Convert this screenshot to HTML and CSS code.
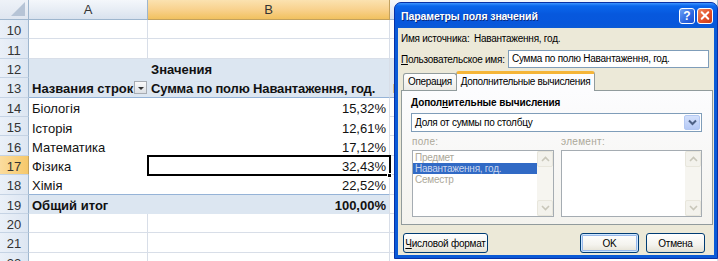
FILE: index.html
```html
<!DOCTYPE html>
<html lang="ru">
<head>
<meta charset="utf-8">
<link rel="stylesheet" href="styles.css">
</head>
<body>
<div class="screen">
  <div class="sheet">
    <div class="corner"></div><div class="ch">A</div><div class="ch sel">B</div><div class="ch">C</div>

    <div class="rh">10</div><div class="c"></div><div class="c"></div><div class="c"></div>
    <div class="rh">11</div><div class="c"></div><div class="c"></div><div class="c"></div>
    <div class="rh">12</div><div class="c pv pa"></div><div class="c pv b">Значения</div><div class="c pv"></div>
    <div class="rh">13</div><div class="c pv pa hd b lbl"><span>Названия строк</span><span class="dd"></span></div><div class="c pv hd b">Сумма по полю Навантаження, год.</div><div class="c pv hd b">Н</div>
    <div class="rh">14</div><div class="c pa pb">Біологія</div><div class="c pb num">15,32%</div><div class="c"></div>
    <div class="rh">15</div><div class="c pa pb">Історія</div><div class="c pb num">12,61%</div><div class="c"></div>
    <div class="rh">16</div><div class="c pa pb">Математика</div><div class="c pb num">17,12%</div><div class="c"></div>
    <div class="rh sel">17</div><div class="c pa pb">Фізика</div><div class="c pb num active">32,43%</div><div class="c"></div>
    <div class="rh">18</div><div class="c pa pb ln">Хімія</div><div class="c pb num ln">22,52%</div><div class="c"></div>
    <div class="rh">19</div><div class="c pv pa b">Общий итог</div><div class="c pv b num">100,00%</div><div class="c"></div>
    <div class="rh">20</div><div class="c"></div><div class="c"></div><div class="c"></div>
    <div class="rh">21</div><div class="c"></div><div class="c"></div><div class="c"></div>
    <div class="rh">22</div><div class="c"></div><div class="c"></div><div class="c"></div>
  </div>

  <div class="dialog">
    <div class="titlebar">
      <span class="title">Параметры поля значений</span>
      <span class="tbtn help">?</span>
      <span class="tbtn close"><svg width="15" height="15" viewBox="0 0 15 15"><path d="M4 4 L11 11 M11 4 L4 11" stroke="#fff" stroke-width="2.2" stroke-linecap="round"/></svg></span>
    </div>
    <div class="body">
      <div class="src"><span class="srclbl">Имя источника:</span><span>Навантаження, год.</span></div>
      <div class="custom"><span class="cuslbl"><u>П</u>ользовательское имя:</span><div class="textbox">Сумма по полю Навантаження, год.</div></div>
      <div class="tabs">
        <div class="tab">Операция</div>
        <div class="tab on">Дополнительные вычисления</div>
      </div>
      <div class="panel">
        <div class="ptitle">Допол<u>н</u>ительные вычисления</div>
        <div class="combo"><span class="ctext">Доля от суммы по столбцу</span><span class="carrow"><svg width="9" height="7" viewBox="0 0 9 7"><path d="M1 1.5 L4.5 5 L8 1.5" fill="none" stroke="#4d6185" stroke-width="2"/></svg></span></div>
        <div class="lists">
          <div class="lcol">
            <div class="llbl">поле:</div>
            <div class="listbox">
              <div class="items">
                <div class="item">Предмет</div>
                <div class="item selitem">Навантаження, год.</div>
                <div class="item">Семестр</div>
              </div>
              <div class="sbar"><span class="sb up"><svg width="9" height="6" viewBox="0 0 9 6"><path d="M1 5 L4.5 1.5 L8 5" fill="none" stroke="#c9c7ba" stroke-width="1.6"/></svg></span><span class="sb dn"><svg width="9" height="6" viewBox="0 0 9 6"><path d="M1 1 L4.5 4.5 L8 1" fill="none" stroke="#c9c7ba" stroke-width="1.6"/></svg></span></div>
            </div>
          </div>
          <div class="lcol">
            <div class="llbl">элемент:</div>
            <div class="listbox">
              <div class="items"></div>
              <div class="sbar"><span class="sb up"><svg width="9" height="6" viewBox="0 0 9 6"><path d="M1 5 L4.5 1.5 L8 5" fill="none" stroke="#c9c7ba" stroke-width="1.6"/></svg></span><span class="sb dn"><svg width="9" height="6" viewBox="0 0 9 6"><path d="M1 1 L4.5 4.5 L8 1" fill="none" stroke="#c9c7ba" stroke-width="1.6"/></svg></span></div>
            </div>
          </div>
        </div>
      </div>
      <div class="btnrow">
        <div class="btn fmt"><u>Ч</u>исловой формат</div>
        <div class="spacer"></div>
        <div class="btn ok">OK</div>
        <div class="btn cancel">Отмена</div>
      </div>
    </div>
  </div>
</div>
</body>
</html>
```

FILE: styles.css
```css
html, body { margin: 0; padding: 0; background: #fff; }
.screen {
  position: relative;
  width: 718px;
  height: 261px;
  overflow: hidden;
  font-family: "Liberation Sans", Arial, sans-serif;
}

/* ---------- spreadsheet ---------- */
.sheet {
  display: grid;
  grid-template-columns: 29px 119px 242px 1fr;
  grid-template-rows: 20px repeat(13, 19.4px);
  font-size: 13px;
  color: #111;
}
.corner {
  background: linear-gradient(#eef2f8, #dfe6f0);
  border-right: 1px solid #9eb6ce;
  border-bottom: 1px solid #9eb6ce;
  box-sizing: border-box;
  position: relative;
}
.corner::after {
  content: "";
  position: absolute;
  right: 3px;
  bottom: 3px;
  border-left: 14px solid transparent;
  border-bottom: 14px solid #b6c4d6;
}
.ch {
  background: linear-gradient(#f4f7fb, #e6ecf4 55%, #d9e2ee);
  border-right: 1px solid #9eb6ce;
  border-bottom: 1px solid #9eb6ce;
  box-sizing: border-box;
  display: flex;
  align-items: center;
  justify-content: center;
  font-size: 13px;
  color: #333;
}
.ch.sel {
  background: linear-gradient(#fbe2b0, #f8d08a 55%, #f1c15f);
  border-right-color: #c2a15e;
  border-bottom-color: #c2a15e;
}
.rh {
  background: linear-gradient(90deg, #eaf0f8, #dde6f2);
  border-right: 1px solid #9eb6ce;
  border-bottom: 1px solid #c5d3e4;
  box-sizing: border-box;
  display: flex;
  align-items: center;
  justify-content: center;
  padding-top: 3px;
  font-size: 13px;
  color: #333;
}
.rh.sel {
  background: linear-gradient(90deg, #fbdc9e, #f6c869);
  border-right-color: #c2a15e;
}
.c {
  border-right: 1px solid #d8dee8;
  border-bottom: 1px solid #d8dee8;
  box-sizing: border-box;
  display: flex;
  align-items: center;
  padding: 3px 3px 0 3px;
  white-space: nowrap;
  overflow: hidden;
}
.pv { background: #dce6f1; }
.pa { border-right: none; }
.pv { border-bottom: none; }
.pb { border-bottom: none; }
.hd { border-bottom: 1px solid #95b3d7; letter-spacing: -0.15px; }
.ln { border-bottom: 1px solid #95b3d7; }
.b { font-weight: bold; }
.num { justify-content: flex-end; }
.lbl { justify-content: space-between; padding-right: 1px; letter-spacing: 0; }
.dd {
  width: 13px;
  height: 13px;
  box-sizing: border-box;
  border: 1px solid #a7acb3;
  background: linear-gradient(#fafafa, #dcdfe4);
  position: relative;
  margin-top: -2px;
}
.dd::after {
  content: "";
  position: absolute;
  left: 3px;
  top: 5px;
  border-left: 3px solid transparent;
  border-right: 3px solid transparent;
  border-top: 3px solid #333;
}
.active {
  position: relative;
  outline: 2px solid #000;
  outline-offset: -1px;
  z-index: 1;
  overflow: visible;
}
.active::after {
  content: "";
  position: absolute;
  right: -3px;
  bottom: -3px;
  width: 5px;
  height: 5px;
  background: #000;
  border: 1px solid #fff;
  box-sizing: border-box;
}

/* ---------- dialog ---------- */
.dialog {
  position: absolute;
  left: 394px;
  top: 2px;
  width: 324px;
  height: 257px;
  box-sizing: border-box;
  background: #0a5ad6;
  border: 1px solid #0831a6;
  border-radius: 7px 7px 0 0;
  padding: 0 3px 3px 3px;
  display: flex;
  flex-direction: column;
  font-size: 10px;
  letter-spacing: -0.25px;
  white-space: nowrap;
  color: #000;
  z-index: 5;
}
.titlebar {
  height: 25px;
  flex: none;
  display: flex;
  align-items: center;
  margin: 0 -3px;
  padding-left: 6px;
  padding-right: 4px;
  border-radius: 6px 6px 0 0;
  background: linear-gradient(#3d95ff 0%, #0a66ec 12%, #0758dd 45%, #0757dc 80%, #0a5ad6 100%);
}
.title {
  flex: 1;
  color: #fff;
  font-weight: bold;
  font-size: 10.5px;
  letter-spacing: -0.1px;
  text-shadow: 1px 1px 0 #0a2a80;
}
.tbtn {
  width: 16px;
  height: 16px;
  box-sizing: border-box;
  border: 1px solid #fff;
  border-radius: 3px;
  display: flex;
  align-items: center;
  justify-content: center;
  color: #fff;
  font-weight: bold;
  font-size: 12px;
  letter-spacing: 0;
  margin-left: 2px;
}
.help { background: linear-gradient(135deg, #6fa2f5, #2c66e0 60%, #1c4fcf); }
.close { background: linear-gradient(135deg, #f08a5f, #e2502a 55%, #c93c17); }
.close svg { display: block; }

.body {
  flex: 1;
  background: #ece9d8;
  padding: 4px 3px 0 3px;
  display: flex;
  flex-direction: column;
}
.src { height: 13px; line-height: 13px; display: flex; }
.srclbl { width: 73px; }
.custom {
  margin-top: 5px;
  height: 18px;
  display: flex;
  align-items: center;
}
.cuslbl { width: 107px; }
.textbox {
  width: 201px;
  height: 18px;
  box-sizing: border-box;
  border: 1px solid #7f9db9;
  background: #fff;
  padding-left: 3px;
  line-height: 16px;
}
.tabs {
  margin-top: 3px;
  height: 19px;
  display: flex;
  align-items: flex-end;
  padding-left: 2px;
  position: relative;
  z-index: 1;
}
.tab {
  height: 17px;
  box-sizing: border-box;
  border: 1px solid #919b9c;
  border-bottom: none;
  border-radius: 3px 3px 0 0;
  background: linear-gradient(#fefefe, #ecebe6);
  padding: 0 4px;
  line-height: 16px;
  letter-spacing: -0.35px;
}
.tab.on {
  height: 20px;
  margin-bottom: -1px;
  background: #fcfcfe;
  border-top: 3px solid #f5b538;
  line-height: 15px;
  margin-left: -1px;
}
.panel {
  height: 135px;
  width: 312px;
  box-sizing: border-box;
  border: 1px solid #919b9c;
  background: linear-gradient(#fcfcfe, #f4f3ee);
  padding: 5px 10px 0 9px;
  display: flex;
  flex-direction: column;
}
.ptitle { font-weight: bold; height: 13px; line-height: 13px; letter-spacing: -0.1px; }
.combo {
  margin-top: 4px;
  height: 19px;
  box-sizing: border-box;
  border: 1px solid #7f9db9;
  background: #fff;
  display: flex;
  align-items: stretch;
}
.ctext { flex: 1; padding-left: 3px; line-height: 17px; }
.carrow {
  width: 16px;
  margin: 1px;
  border-radius: 2px;
  background: linear-gradient(#d4e1fc, #b5c9f5);
  border: 1px solid #b3c8f2;
  box-sizing: border-box;
  display: flex;
  align-items: center;
  justify-content: center;
}
.lists {
  margin-top: 3px;
  display: flex;
  gap: 7px;
  padding-left: 1px;
}
.lcol { display: flex; flex-direction: column; }
.lcol:first-child { width: 143px; }
.lcol:last-child { width: 142px; }
.llbl { color: #aca899; height: 13px; line-height: 13px; margin-bottom: 2px; letter-spacing: 0.3px; }
.listbox {
  height: 67px;
  box-sizing: border-box;
  border: 1px solid #a5acb2;
  background: #fff;
  display: flex;
}
.items { flex: 1; font-size: 10px; color: #aca899; padding-top: 1px; }
.item { height: 11px; line-height: 11px; padding-left: 2px; }
.selitem { background: #316ac5; color: #c9d6ee; }
.sbar {
  width: 16px;
  background: #f6f5f0;
  display: flex;
  flex-direction: column;
  justify-content: space-between;
}
.sb {
  height: 16px;
  border: 1px solid #e8e6dc;
  border-radius: 2px;
  box-sizing: border-box;
  background: #f3f2ec;
  display: flex;
  align-items: center;
  justify-content: center;
}
.btnrow {
  margin-top: 8px;
  height: 20px;
  display: flex;
  gap: 7px;
  padding-left: 2px;
  padding-right: 6px;
}
.spacer { flex: 1; }
.btn {
  height: 20px;
  box-sizing: border-box;
  border: 1px solid #003c74;
  border-radius: 3px;
  background: linear-gradient(#ffffff, #f4f3ee 60%, #e3e0d3);
  display: flex;
  align-items: center;
  justify-content: center;
}
.fmt { width: 85px; }
.ok { width: 59px; box-shadow: inset 0 0 0 1px #cee7ff, inset 0 0 0 2px #98b8ea; }
.cancel { width: 59px; }
```
